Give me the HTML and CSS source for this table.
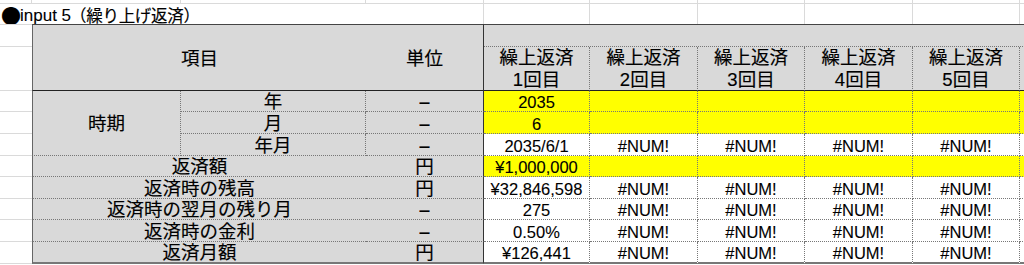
FILE: index.html
```html
<!DOCTYPE html>
<html lang="ja">
<head>
<meta charset="utf-8">
<title>input 5（繰り上げ返済）</title>
<link rel="stylesheet" href="styles.css">
</head>
<body>
<div class="sheet">
  <!-- row 0: top strip -->
  <div class="gl"></div><div class="gl"></div><div class="gl"></div><div class="gl"></div><div class="gl"></div>
  <div class="gl"></div><div class="gl"></div><div class="gl"></div><div class="gl"></div><div class="gl"></div>

  <!-- row 1: title -->
  <div class="title"><span class="mark">●</span>input 5<span class="tjp">（繰り上げ返済）</span></div>
  <div class="glr"></div><div class="glr"></div><div class="glr"></div><div class="glr"></div>
  <div class="glr"></div><div class="glr"></div><div class="glr"></div>

  <!-- row 2/3: header -->
  <div class="colA first"></div>
  <div class="cell g jp h-item">項目</div>
  <div class="cell g jp h-unit">単位</div>
  <div class="cell g h-top"></div>

  <div class="colA"></div>
  <div class="cell g jp h-col">繰上返済<br>1回目</div>
  <div class="cell g jp h-col">繰上返済<br>2回目</div>
  <div class="cell g jp h-col">繰上返済<br>3回目</div>
  <div class="cell g jp h-col">繰上返済<br>4回目</div>
  <div class="cell g jp h-col">繰上返済<br>5回目</div>
  <div class="cell g h-col"></div>

  <!-- 年 -->
  <div class="colA"></div>
  <div class="cell g jp period">時期</div>
  <div class="cell g jp sub">年</div>
  <div class="cell g dash unit">－</div>
  <div class="cell y d">2035</div>
  <div class="cell y d"></div><div class="cell y d"></div><div class="cell y d"></div><div class="cell y d"></div><div class="cell y d"></div>

  <!-- 月 -->
  <div class="colA"></div>
  <div class="cell g jp sub">月</div>
  <div class="cell g dash unit">－</div>
  <div class="cell y d">6</div>
  <div class="cell y d"></div><div class="cell y d"></div><div class="cell y d"></div><div class="cell y d"></div><div class="cell y d"></div>

  <!-- 年月 -->
  <div class="colA"></div>
  <div class="cell g jp sub">年月</div>
  <div class="cell g dash unit">－</div>
  <div class="cell d">2035/6/1</div>
  <div class="cell d">#NUM!</div><div class="cell d">#NUM!</div><div class="cell d">#NUM!</div><div class="cell d">#NUM!</div><div class="cell d"></div>

  <!-- 返済額 -->
  <div class="colA"></div>
  <div class="cell g jp label">返済額</div>
  <div class="cell g jp unit">円</div>
  <div class="cell y d">¥1,000,000</div>
  <div class="cell y d"></div><div class="cell y d"></div><div class="cell y d"></div><div class="cell y d"></div><div class="cell y d"></div>

  <!-- 返済時の残高 -->
  <div class="colA"></div>
  <div class="cell g jp label">返済時の残高</div>
  <div class="cell g jp unit">円</div>
  <div class="cell d">¥32,846,598</div>
  <div class="cell d">#NUM!</div><div class="cell d">#NUM!</div><div class="cell d">#NUM!</div><div class="cell d">#NUM!</div><div class="cell d"></div>

  <!-- 返済時の翌月の残り月 -->
  <div class="colA"></div>
  <div class="cell g jp label">返済時の翌月の残り月</div>
  <div class="cell g dash unit">－</div>
  <div class="cell d">275</div>
  <div class="cell d">#NUM!</div><div class="cell d">#NUM!</div><div class="cell d">#NUM!</div><div class="cell d">#NUM!</div><div class="cell d"></div>

  <!-- 返済時の金利 -->
  <div class="colA"></div>
  <div class="cell g jp label">返済時の金利</div>
  <div class="cell g dash unit">－</div>
  <div class="cell d">0.50%</div>
  <div class="cell d">#NUM!</div><div class="cell d">#NUM!</div><div class="cell d">#NUM!</div><div class="cell d">#NUM!</div><div class="cell d"></div>

  <!-- 返済月額 -->
  <div class="colA"></div>
  <div class="cell g jp label last">返済月額</div>
  <div class="cell g jp unit last">円</div>
  <div class="cell d last">¥126,441</div>
  <div class="cell d last">#NUM!</div><div class="cell d last">#NUM!</div><div class="cell d last">#NUM!</div><div class="cell d last">#NUM!</div><div class="cell d last"></div>
</div>
</body>
</html>
```

FILE: styles.css
```css
html, body {
  margin: 0;
  padding: 0;
  overflow: hidden;
  background: #ffffff;
}

.sheet {
  display: grid;
  width: 1024px;
  height: 265px;
  overflow: hidden;
  grid-template-columns: 32px 149px 185px 118px 106px 108px 107px 108px 107px 107px;
  grid-template-rows: 4px 20px 23px 44px 21px 22px 22px 21px 22px 21px 22px 22px 1px;
  font-family: "Liberation Sans", "Noto Sans CJK JP", sans-serif;
  font-size: 16.5px;
  line-height: 18px;
  color: #000;
  -webkit-text-stroke: 0.1px #000;
}

.sheet > div {
  box-sizing: border-box;
  min-width: 0;
}

/* Excel gridlines */
.gl {
  border-right: 1px solid #dadada;
  border-bottom: 1px solid #dadada;
}
.glr {
  border-right: 1px solid #dadada;
}
.colA {
  border-bottom: 1px solid #dadada;
}
.colA.first {
  border-top: 1px solid #dadada;
}

.title {
  grid-column: span 3;
  display: flex;
  align-items: center;
  padding-left: 2px;
  padding-top: 3px;
  white-space: nowrap;
  font-size: 17px;
  line-height: 17px;
}
.tjp {
  font-family: "Noto Sans CJK JP", sans-serif;
  font-size: 16.5px;
  letter-spacing: -0.3px;
  margin-left: -1px;
  -webkit-text-stroke: 0.15px #000;
}
.mark {
  font-family: "Noto Sans CJK JP", sans-serif;
  font-size: 20px;
  margin-left: -1px;
  margin-right: -1px;
}

/* table cells */
.cell {
  display: flex;
  align-items: center;
  justify-content: center;
  text-align: center;
  white-space: nowrap;
  padding-top: 2px;
  overflow: visible;
}
.jp {
  font-size: 18.5px;
  -webkit-text-stroke: 0.15px #000;
}
.dash {
  font-family: "Noto Sans CJK JP", sans-serif;
  font-size: 14px;
  font-weight: 700;
}
.g { background: #d9d9d9; }
.y { background: #ffff00; }

.h-item {
  grid-column: span 2;
  grid-row: span 2;
  border-top: 1px solid #444;
  border-left: 1px solid #666;
  border-bottom: 1px solid #222;
}
.h-unit {
  grid-row: span 2;
  border-top: 1px solid #444;
  border-right: 1px solid #333;
  border-bottom: 1px solid #222;
}
.h-top {
  grid-column: span 6;
  border-top: 1px solid #444;
  border-bottom: 1px dotted #777;
}
.h-col {
  border-right: 1px dotted #777;
  border-bottom: 1px solid #222;
  padding-top: 1px;
  line-height: 22px;
}

.period {
  grid-row: span 3;
  border-left: 1px solid #666;
  border-right: 1px dotted #777;
  border-bottom: 1px dotted #777;
}
.sub {
  border-right: 1px dotted #777;
  border-bottom: 1px dotted #777;
}
.label {
  grid-column: span 2;
  border-left: 1px solid #666;
  border-bottom: 1px dotted #777;
}
.unit {
  border-right: 1px solid #333;
  border-bottom: 1px dotted #777;
}
.d {
  border-right: 1px dotted #777;
  border-bottom: 1px dotted #777;
}
.cell.last {
  border-bottom: 2px solid #777;
}
```
